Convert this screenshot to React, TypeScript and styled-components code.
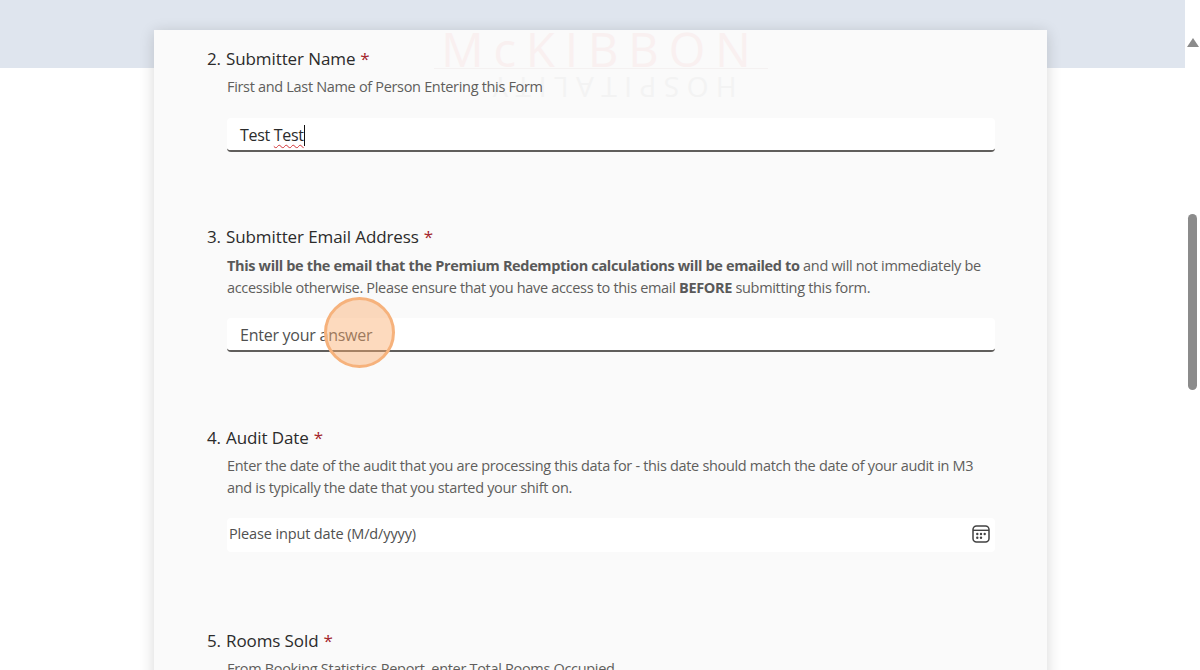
import React from 'react';
import styled, { createGlobalStyle } from 'styled-components';

const GlobalStyle = createGlobalStyle`
  html, body {
    margin: 0;
    padding: 0;
    height: 670px;
    overflow: hidden;
    background: #fff;
    font-family: "Open Sans", "Noto Sans", "Liberation Sans", sans-serif;
  }
`;

const Page = styled.div`
  display: flex;
  width: 1200px;
  height: 670px;
  overflow: hidden;
`;

const Canvas = styled.main`
  flex: 1;
  padding: 30px 0 0 154px;
  background: linear-gradient(#dfe5ee 68px, #fff 68px);
`;

const Card = styled.section`
  position: relative;
  width: 893px;
  height: 700px;
  box-sizing: border-box;
  padding: 16px 52px 0 53px;
  background: #fafafa;
  box-shadow: 0 2px 14px rgba(0, 0, 0, 0.16);
`;

const Watermark = styled.div`
  position: absolute;
  top: 0;
  left: 280px;
  width: 334px;
  display: flex;
  flex-direction: column;
  align-items: center;
  pointer-events: none;
`;

const Brand = styled.div`
  width: 100%;
  text-align: center;
  font-size: 47px;
  line-height: 38px;
  height: 38px;
  letter-spacing: 10px;
  color: #f9f0f0;
  border-bottom: 1px solid #f4f1f1;
`;

const BrandSub = styled.div`
  margin: 4px 0 0 20px;
  font-size: 28px;
  line-height: 30px;
  letter-spacing: 7.5px;
  color: #f3f3f3;
  transform: rotate(180deg);
`;

const Question = styled.div<{ $gap: number }>`
  position: relative;
  margin-bottom: ${(p) => p.$gap}px;
`;

const Title = styled.div`
  display: flex;
  font-size: 17px;
  line-height: 25px;
  letter-spacing: -0.1px;
  color: #2b2b2b;
`;

const Num = styled.span`
  width: 19px;
`;

const Star = styled.span`
  margin-left: 5px;
  color: #a4262c;
`;

const Description = styled.p<{ $nudge?: number }>`
  margin: ${(p) => 5 + (p.$nudge ?? 0)}px 0 0 20px;
  font-size: 14.5px;
  line-height: 22px;
  color: #605e5c;
  letter-spacing: -0.32px;

  strong {
    font-weight: 700;
    letter-spacing: -0.35px;
    color: #595959;
  }
`;

const InputBox = styled.div<{ $date?: boolean; $nudge?: number }>`
  position: relative;
  display: flex;
  align-items: center;
  justify-content: space-between;
  height: 34px;
  margin: ${(p) => (p.$date ? 19 : 20) + (p.$nudge ?? 0)}px 0 0 20px;
  padding: ${(p) => (p.$date ? '0 4px 3px 2px' : '1px 4px 0 13px')};
  background: #fff;
  border-radius: 4px;
  border-bottom: ${(p) => (p.$date ? 'none' : '2px solid #605e5c')};
  box-sizing: border-box;
  font-size: ${(p) => (p.$date ? 14.5 : 16)}px;
  letter-spacing: ${(p) => (p.$date ? -0.14 : -0.25)}px;
  color: #505050;
`;

const Typed = styled.span`
  color: #2b2b2b;
  letter-spacing: -0.3px;
`;

const Misspelled = styled.span`
  display: inline-block;
  line-height: 21px;
  text-decoration: underline wavy #d13438 1px;
  text-underline-offset: 3px;
  border-right: 1.5px solid #111;
`;

const ClickMark = styled.div`
  position: absolute;
  left: 97px;
  top: -21px;
  width: 71px;
  height: 71px;
  box-sizing: border-box;
  border-radius: 50%;
  background: rgba(250, 172, 110, 0.45);
  border: 3px solid #f6b27c;
`;

const Scrollbar = styled.aside`
  flex: none;
  width: 15px;
  display: flex;
  flex-direction: column;
  align-items: center;
  padding-top: 38px;
  box-sizing: border-box;
  background: #fff;
`;

const Arrow = styled.div`
  width: 0;
  height: 0;
  border-left: 6px solid transparent;
  border-right: 6px solid transparent;
  border-bottom: 9px solid #8b8b8b;
`;

const Thumb = styled.div`
  width: 9px;
  height: 176px;
  margin-top: 167px;
  border-radius: 5px;
  background: #8b8b8b;
`;

const CalendarIcon = () => (
  <svg width="20" height="20" viewBox="0 0 20 20" fill="none">
    <rect x="2" y="2" width="16" height="16" rx="3.5" stroke="#424242" strokeWidth="1.5" />
    <path d="M2 6.3h16" stroke="#424242" strokeWidth="1.4" />
    <g fill="#424242">
      <circle cx="6.3" cy="10" r="1.2" />
      <circle cx="10" cy="10" r="1.2" />
      <circle cx="13.7" cy="10" r="1.2" />
      <circle cx="6.3" cy="13.7" r="1.2" />
      <circle cx="10" cy="13.7" r="1.2" />
    </g>
  </svg>
);

const App: React.FC = () => (
  <Page>
    <GlobalStyle />
    <Canvas>
      <Card>
        <Watermark>
          <Brand>McKIBBON</Brand>
          <BrandSub>HOSPITALITY</BrandSub>
        </Watermark>

        <Question $gap={72}>
          <Title>
            <Num>2.</Num>Submitter Name<Star>*</Star>
          </Title>
          <Description>First and Last Name of Person Entering this Form</Description>
          <InputBox>
            <Typed>
              Test <Misspelled>Test</Misspelled>
            </Typed>
          </InputBox>
        </Question>

        <Question $gap={73}>
          <Title>
            <Num>3.</Num>Submitter Email Address<Star>*</Star>
          </Title>
          <Description $nudge={1}>
            <strong>This will be the email that the Premium Redemption calculations will be emailed to</strong> and
            will not immediately be accessible otherwise. Please ensure that you have access to this email{' '}
            <strong>BEFORE</strong> submitting this form.
          </Description>
          <InputBox $nudge={-1}>
            Enter your answer
            <ClickMark />
          </InputBox>
        </Question>

        <Question $gap={76}>
          <Title>
            <Num>4.</Num>Audit Date<Star>*</Star>
          </Title>
          <Description>
            Enter the date of the audit that you are processing this data for - this date should match the date of
            your audit in M3 and is typically the date that you started your shift on.
          </Description>
          <InputBox $date>
            Please input date (M/d/yyyy)
            <CalendarIcon />
          </InputBox>
        </Question>

        <Question $gap={0}>
          <Title>
            <Num>5.</Num>Rooms Sold<Star>*</Star>
          </Title>
          <Description>From Booking Statistics Report, enter Total Rooms Occupied</Description>
        </Question>
      </Card>
    </Canvas>
    <Scrollbar>
      <Arrow />
      <Thumb />
    </Scrollbar>
  </Page>
);

export default App;
